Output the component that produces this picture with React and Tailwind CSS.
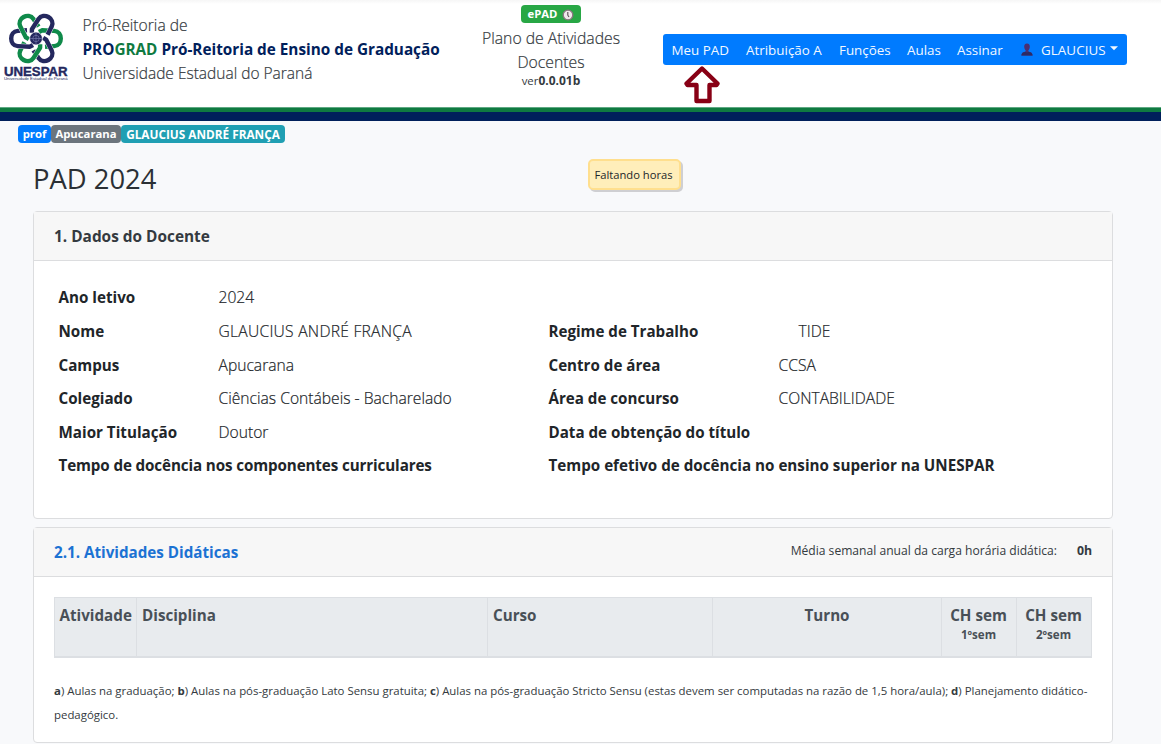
import React from "react";

const NAVY = "#24285e";
const GREEN = "#0f8a4a";

const LOOP = "M9 8.2 L18.2 7.6 C27 7 27 -7 18.2 -7.6 L6 -8.2 L3 -6.5";

function Petal({ angle, color }) {
  return (
    <g transform={`rotate(${angle})`} fill="none" strokeLinecap="butt" strokeLinejoin="round">
      <path d={LOOP} stroke="#fff" strokeWidth="5.2" />
      <path d={LOOP} stroke={color} strokeWidth="4.4" />
    </g>
  );
}

function Logo() {
  return (
    <svg width="72" height="76" viewBox="0 8 72 76" className="block">
      <g transform="translate(36 38.5)">
        <Petal angle={0} color={GREEN} />
        <Petal angle={60} color={NAVY} />
        <Petal angle={120} color={GREEN} />
        <Petal angle={180} color={NAVY} />
        <Petal angle={240} color={GREEN} />
        <Petal angle={300} color={NAVY} />
        <circle r="6.4" fill={NAVY} stroke="#fff" strokeWidth="0.6" />
        <circle r="3.2" fill="none" stroke="#7d82b3" strokeWidth="0.6" />
        <path d="M-6 0H6M0 -6V6" stroke="#7d82b3" strokeWidth="0.6" />
      </g>
      <text x="4" y="75.5" textLength="63.5" lengthAdjust="spacingAndGlyphs" fontFamily="Liberation Sans" fontWeight="700" fontSize="12.6" fill={NAVY} stroke={NAVY} strokeWidth="0.4">UNESPAR</text>
      <text x="4" y="80.4" textLength="63.5" lengthAdjust="spacingAndGlyphs" fontFamily="Liberation Sans" fontSize="4.2" fill={NAVY}>Universidade Estadual do Paraná</text>
    </svg>
  );
}

function ClockIcon() {
  return (
    <svg width="12" height="12" viewBox="0 0 12 12" className="mt-px">
      <circle cx="6" cy="6" r="4.8" fill="#efe9ec" stroke="#8a7480" strokeWidth="1.3" />
      <path d="M5.8 3V6.2L7 8" fill="none" stroke="#5a4a55" strokeWidth="1.1" />
    </svg>
  );
}

function UserIcon() {
  return (
    <svg width="12" height="13" viewBox="0 0 12 13">
      <path d="M6 0.4C3.9 0.4 3.1 1.8 3.2 3.7C3.3 5.4 4 6.6 4.6 7.3V8.6C2.6 9.2 0.6 9.6 0.4 12.6H11.6C11.4 9.6 9.4 9.2 7.4 8.6V7.3C8 6.6 8.7 5.4 8.8 3.7C8.9 1.8 8.1 0.4 6 0.4Z" fill="#4a2f72" />
      <path d="M0.4 12.6C0.6 9.8 2.4 9.3 4.4 8.7L6 9.6L7.6 8.7C9.6 9.3 11.4 9.8 11.6 12.6Z" fill="#2c2b66" />
    </svg>
  );
}

function Row({ top, l1, v1, l2, v2, indent }) {
  return (
    <div className={`flex items-center whitespace-nowrap ${top}`}>
      <div className="w-[160px] shrink-0 text-[15.2px] font-bold">{l1}</div>
      <div className="w-[330px] shrink-0 text-[15.65px] font-light [-webkit-text-stroke:0.2px]">{v1}</div>
      <div className="w-[230px] shrink-0 text-[15.15px] font-bold">{l2}</div>
      <div className={`text-[15.65px] font-light [-webkit-text-stroke:0.2px] ${indent ? "pl-5" : ""}`}>{v2}</div>
    </div>
  );
}

export default function App() {
  return (
    <div className="h-[744px] w-[1161px] overflow-hidden bg-[#f8f9fb] font-['Open_Sans','Noto_Sans',sans-serif] leading-6 text-[#212529]">
      <header className="flex h-[107px] items-start bg-[linear-gradient(#f6f6f6,#fff_4px)] text-[#343a40]">
        <div className="w-[82.5px] shrink-0 pt-2">
          <Logo />
        </div>
        <div className="w-[383px] shrink-0 whitespace-nowrap pt-[13px]">
          <div className="text-[15.65px] font-light [-webkit-text-stroke:0.2px]">Pró-Reitoria de</div>
          <div className="text-[15.3px] font-bold text-[#00205b]">
            PRO<span className="text-[#0f7a41]">GRAD</span> Pró-Reitoria de Ensino de Graduação
          </div>
          <div className="text-[15.5px] font-light [-webkit-text-stroke:0.2px]">Universidade Estadual do Paraná</div>
        </div>
        <div className="flex w-[171px] shrink-0 flex-col items-center pt-[5px]">
          <div className="mb-[3px] flex h-[18px] w-[60px] items-center justify-center gap-[5px] rounded bg-[#28a745] text-[11.3px] font-bold text-white">
            ePAD
            <ClockIcon />
          </div>
          <div className="text-center text-[15.75px] font-light [-webkit-text-stroke:0.2px]">
            Plano de Atividades
            <br />
            Docentes
          </div>
          <div className="-mt-px text-[11.4px] leading-4">
            ver<span className="text-[12px] font-bold">0.0.01b</span>
          </div>
        </div>
        <nav className="ml-[26.5px] mt-[34px] flex h-[31px] w-[464px] items-center whitespace-nowrap rounded-[3px] bg-[#007bff] pl-[8.5px] text-[13.4px] text-[#f2f8ff]">
          <span className="w-[74.5px]">Meu PAD</span>
          <span className="w-[93px]">Atribuição A</span>
          <span className="w-[68px]">Funções</span>
          <span className="w-[50px]">Aulas</span>
          <span className="w-[64px]">Assinar</span>
          <UserIcon />
          <span className="ml-[8px] w-[69px] tracking-[0.05px]">GLAUCIUS</span>
          <svg width="8" height="5" viewBox="0 0 8 5" className="-mt-0.5">
            <path d="M0 0.3H8L4 4.3Z" fill="#f2f8ff" />
          </svg>
        </nav>
        <svg width="38" height="38" viewBox="0 0 38 38" className="absolute left-[683px] top-[66px]">
          <path d="M19 2.5L34.5 17.5L33.5 19H26.5V35H13.5V19H4.5L3.5 17.5Z" fill="#fff" stroke="#880015" strokeWidth="4.4" strokeLinejoin="round" />
        </svg>
      </header>
      <div className="h-[5px] border-t border-[#5fa983] bg-[#0f7a41]" />
      <div className="h-[9px] bg-[#00205b]" />

      <div className="flex h-[22px] items-start whitespace-nowrap pl-[18px] pt-1 text-[11.3px] font-bold leading-[18px] text-white">
        <span className="h-[18px] w-[33px] rounded bg-[#007bff] text-center">prof</span>
        <span className="h-[18px] w-[70px] rounded bg-[#6c757d] text-center">Apucarana</span>
        <span className="h-[18px] w-[164px] rounded bg-[#209fb3] text-center text-[11.8px]">GLAUCIUS ANDRÉ FRANÇA</span>
      </div>

      <main className="w-[1113px] pl-[33px]">
        <div className="flex h-[68px] items-start">
          <h1 className="mt-[19px] w-[555px] text-[27.4px] leading-[34px] text-[#2b3035]">PAD 2024</h1>
          <div className="mt-4 flex h-[31px] w-[93px] items-center justify-center whitespace-nowrap rounded-[5px] border-2 border-[#ffdf8e] bg-[#ffeeba] pr-0.5 text-[11.2px] shadow-[2px_2px_0_#cfcfd2]">
            Faltando horas
          </div>
        </div>

        <section className="h-[308px] rounded border border-[#dcdddf] bg-white">
          <div className="flex h-[49px] items-center border-b border-[#dcdddf] bg-[#f7f7f7] pl-5 pt-px text-[15.4px] font-bold text-[#343a40]">
            1. Dados do Docente
          </div>
          <div className="pl-[24.5px] pt-[19px]">
            <Row top="h-[34px]" l1="Ano letivo" v1="2024" />
            <Row top="h-[34px]" l1="Nome" v1={<span className="tracking-[0.25px]">GLAUCIUS ANDRÉ FRANÇA</span>} l2="Regime de Trabalho" v2="TIDE" indent />
            <Row top="h-[33px]" l1="Campus" v1="Apucarana" l2="Centro de área" v2="CCSA" />
            <Row top="h-[34px]" l1="Colegiado" v1="Ciências Contábeis - Bacharelado" l2="Área de concurso" v2="CONTABILIDADE" />
            <Row top="h-[33px]" l1="Maior Titulação" v1="Doutor" l2="Data de obtenção do título" />
            <div className="flex h-[34px] items-center whitespace-nowrap text-[15.2px] font-bold">
              <div className="w-[490px] shrink-0 tracking-[-0.12px]">Tempo de docência nos componentes curriculares</div>
              <div>Tempo efetivo de docência no ensino superior na UNESPAR</div>
            </div>
          </div>
        </section>

        <section className="mt-2 h-[216px] rounded border border-[#dcdddf] bg-white">
          <div className="flex h-[49px] items-center border-b border-[#dcdddf] bg-[#f7f7f7] pl-5 pr-5 text-[#343a40]">
            <div className="text-[15.2px] font-bold text-[#1c72d3]">2.1. Atividades Didáticas</div>
            <div className="-mt-0.5 ml-auto mr-5 text-[12.1px]">Média semanal anual da carga horária didática:</div>
            <div className="-mt-0.5 text-[12.3px] font-bold">0h</div>
          </div>
          <div className="pl-5 pr-5 pt-5 text-[#343a40]">
            <div className="grid h-[61px] grid-cols-[82px_351px_225px_229px_75px_75px] border border-b-2 border-[#dcdfe3] bg-[#e8ebee] text-[15.2px] font-bold text-[#495057]">
              <div className="border-r border-[#dcdfe3] pl-[4.5px] pt-[5px]">Atividade</div>
              <div className="border-r border-[#dcdfe3] pl-[5px] pt-[5px]">Disciplina</div>
              <div className="border-r border-[#dcdfe3] pl-[5px] pt-[5px]">Curso</div>
              <div className="border-r border-[#dcdfe3] pt-[5px] text-center">Turno</div>
              <div className="border-r border-[#dcdfe3] pr-px pt-[5px] text-center">
                CH sem
                <div className="-mt-[3px] text-[11.6px] leading-[22px]">1ºsem</div>
              </div>
              <div className="pr-0.5 pt-[5px] text-center">
                CH sem
                <div className="-mt-[3px] text-[11.6px] leading-[22px]">2ºsem</div>
              </div>
            </div>
            <p className="mt-[21px] whitespace-nowrap text-[11.41px]">
              <b>a</b>) Aulas na graduação; <b>b</b>) Aulas na pós-graduação Lato Sensu gratuita; <b>c</b>) Aulas na pós-graduação Stricto Sensu (estas devem ser computadas na razão de 1,5 hora/aula); <b>d</b>) Planejamento didático-
              <br />
              pedagógico.
            </p>
          </div>
        </section>
      </main>
    </div>
  );
}
